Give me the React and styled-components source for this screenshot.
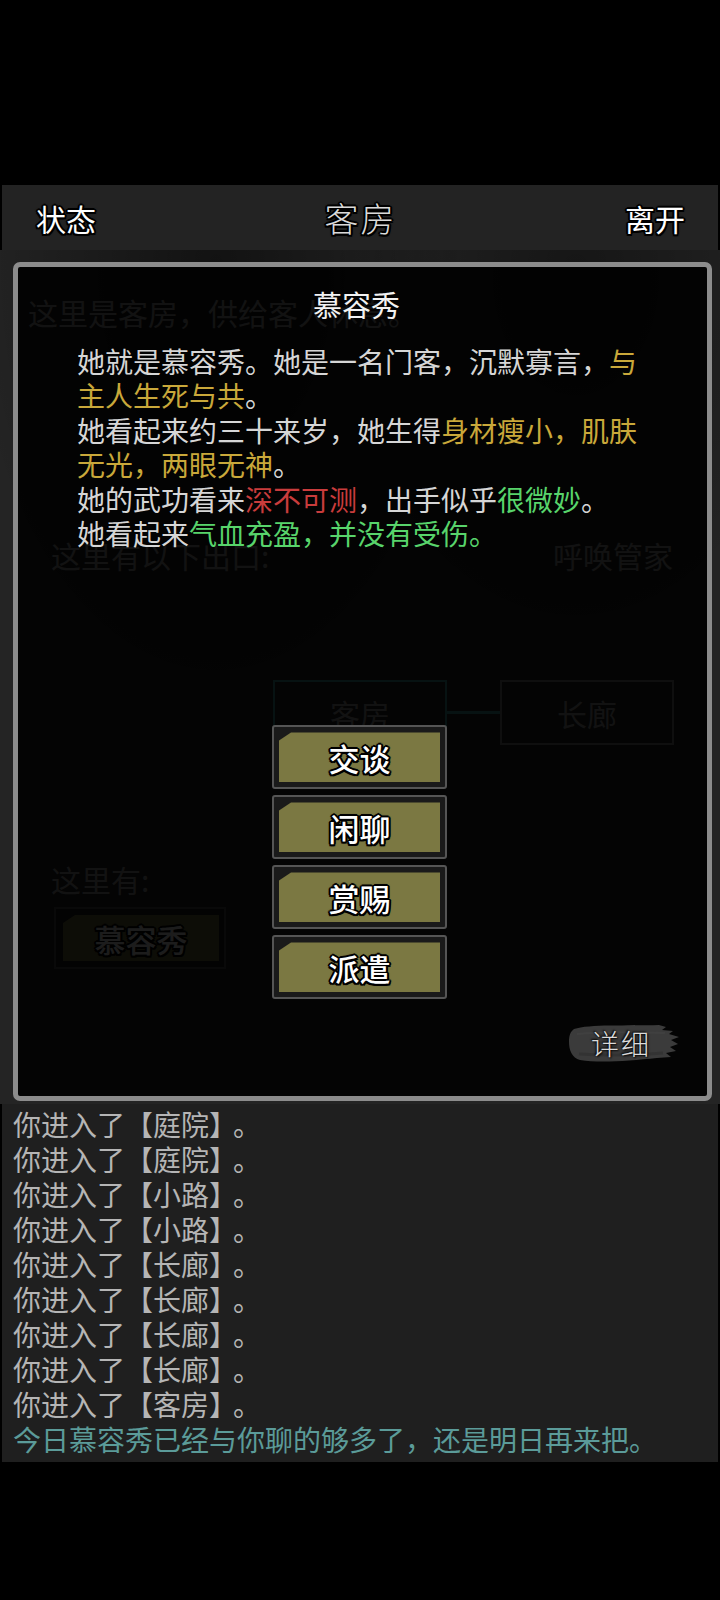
import React from 'react';
import styled, { createGlobalStyle, css } from 'styled-components';

const GlobalStyle = createGlobalStyle`
  html, body { margin: 0; padding: 0; background: #000; }
  body {
    font-family: "Noto Sans CJK SC", "Noto Sans", sans-serif;
    width: 720px;
    min-height: 1600px;
  }
  * { box-sizing: border-box; }
`;

const outline = css`
  text-shadow:
    2px 0 0 #000, -2px 0 0 #000, 0 2px 0 #000, 0 -2px 0 #000,
    1.5px 1.5px 0 #000, -1.5px -1.5px 0 #000, 1.5px -1.5px 0 #000, -1.5px 1.5px 0 #000,
    0 0 3px #000;
`;

const Screen = styled.div`
  width: 720px;
  min-height: 1600px;
  background: #000;
  padding-top: 185px;
`;

const Header = styled.header`
  margin: 0 2px;
  height: 65px;
  background: #232323;
  display: flex;
  align-items: center;
  justify-content: space-between;
  padding: 0 33px 0 34px;
`;

const HeaderButton = styled.div`
  font-size: 30px;
  line-height: 40px;
  color: #fff;
  font-weight: 400;
  ${outline}
`;

const HeaderTitle = styled.div`
  font-size: 34px;
  line-height: 40px;
  color: #dadada;
  font-weight: 300;
  letter-spacing: 2px;
  ${outline}
`;

const Stage = styled.main`
  position: relative;
  height: 854px;
  background:
    radial-gradient(ellipse at 30% 2%, rgba(0,0,0,0.5) 0%, rgba(0,0,0,0) 35%),
    radial-gradient(ellipse at 80% 3%, rgba(0,0,0,0.4) 0%, rgba(0,0,0,0) 30%),
    #242424;
  padding-top: 42px;
`;

const faint = '#a4a4a4';

const RoomDesc = styled.p`
  margin: 0;
  padding-left: 28px;
  font-size: 30px;
  line-height: 40px;
  color: ${faint};
`;

const ExitsRow = styled.div`
  margin-top: 203px;
  display: flex;
  justify-content: space-between;
  padding: 0 47px 0 51px;
  font-size: 30px;
  line-height: 40px;
  color: ${faint};
`;

const MapRow = styled.div`
  margin-top: 105px;
  margin-left: 273px;
  display: flex;
  align-items: center;
`;

const MapNode = styled.div`
  width: 174px;
  height: 65px;
  border: 2px solid ${p => (p.$current ? '#3fa3a0' : '#8a8a8a')};
  display: flex;
  align-items: center;
  justify-content: center;
  font-size: 30px;
  color: ${faint};
`;

const MapLink = styled.div`
  width: 53px;
  height: 3px;
  background: #3fa3a0;
`;

const HereLabel = styled.div`
  margin-top: 114px;
  padding-left: 51px;
  font-size: 30px;
  line-height: 40px;
  color: ${faint};
`;

const NpcButton = styled.div`
  margin: 8px 0 0 54px;
  width: 172px;
  height: 62px;
  border: 2px solid #555;
  background: #1b1b1b;
  padding: 6px 5px 6px 7px;
  display: flex;
`;

const OliveFace = styled.div`
  flex: 1;
  background: #7b7842;
  clip-path: polygon(12px 0, 100% 0, 100% 100%, 0 100%, 0 8px);
  display: flex;
  align-items: center;
  justify-content: center;
  font-size: 31px;
  color: #fff;
  font-weight: 500;
  ${outline}
`;

const Modal = styled.section`
  position: absolute;
  top: 12px;
  left: 13px;
  width: 699px;
  height: 839px;
  border: 5px solid #8c8c8c;
  border-radius: 7px;
  background: rgba(0, 0, 0, 0.89);
  display: flex;
  flex-direction: column;
`;

const ModalTitle = styled.h2`
  margin: 0;
  padding: 17px 12px 0 0;
  font-size: 29px;
  line-height: 40px;
  font-weight: 400;
  text-align: center;
  color: #f2f2f2;
`;

const Description = styled.div`
  margin: 20px 0 0 59px;
  width: 566px;
  font-size: 28px;
  line-height: 34.4px;
  color: #d6d6d6;
`;

const Para = styled.p`
  margin: 0;
`;

const Hl = styled.span`
  color: ${p => ({ gold: '#c9a83a', red: '#c93c3c', green: '#58d46b' }[p.$c])};
`;

const Actions = styled.div`
  margin: 175px 0 0 254px;
  display: flex;
  flex-direction: column;
  gap: 6px;
`;

const ActionButton = styled.div`
  width: 175px;
  height: 64px;
  border: 2px solid #555;
  border-radius: 3px;
  background: #1a1a1a;
  padding: 5px;
  display: flex;
`;

const DetailRow = styled.div`
  margin-top: auto;
  display: flex;
  justify-content: flex-end;
  padding: 0 26px 32px 0;
`;

const Brush = styled.div`
  position: relative;
  width: 114px;
  height: 42px;
  display: flex;
  align-items: center;
  justify-content: center;
  padding-right: 6px;
  font-size: 28px;
  font-weight: 300;
  letter-spacing: 2px;
  color: #dcdcdc;
  text-shadow: 1px 1px 2px #000, -1px -1px 2px #000;
  svg { position: absolute; inset: 0; z-index: 0; }
  span { position: relative; z-index: 1; }
`;

const Log = styled.section`
  margin: 0 2px;
  background: #1f1f1f;
  padding: 3px 11px 5px;
  font-size: 28px;
  line-height: 35px;
  color: #b5b5b5;
`;

const LogLine = styled.div`
  color: ${p => (p.$notice ? '#5b9b99' : '#b5b5b5')};
  white-space: nowrap;
`;

const Stop = styled.span`
  margin-left: 10px;
`;

const logs = ['庭院', '庭院', '小路', '小路', '长廊', '长廊', '长廊', '长廊', '客房'];

function BrushShape() {
  return (
    <svg width="114" height="42" viewBox="0 0 114 42">
      <path
        d="M7 7 C 22 2, 60 4, 92 3 L 99 5 L 95 8 L 106 9 L 102 12 L 112 15 L 104 18 L 111 22 L 103 25 L 109 29 L 99 31 L 104 35 L 90 36 C 62 39, 32 41, 13 38 C 5 36, 2 28, 2 20 C 2 14, 3 10, 7 7 Z"
        fill="#3b3b3b"
      />
      <path d="M10 12 C 40 9, 70 10, 98 11" stroke="#444" strokeWidth="2" fill="none" opacity="0.6" />
      <path d="M12 32 C 40 34, 70 33, 96 31" stroke="#303030" strokeWidth="3" fill="none" opacity="0.7" />
    </svg>
  );
}

export default function App() {
  return (
    <>
      <GlobalStyle />
      <Screen>
        <Header>
          <HeaderButton>状态</HeaderButton>
          <HeaderTitle>客房</HeaderTitle>
          <HeaderButton>离开</HeaderButton>
        </Header>
        <Stage>
          <RoomDesc>这里是客房，供给客人休息。</RoomDesc>
          <ExitsRow>
            <span>这里有以下出口:</span>
            <span>呼唤管家</span>
          </ExitsRow>
          <MapRow>
            <MapNode $current>客房</MapNode>
            <MapLink />
            <MapNode>长廊</MapNode>
          </MapRow>
          <HereLabel>这里有:</HereLabel>
          <NpcButton>
            <OliveFace>慕容秀</OliveFace>
          </NpcButton>

          <Modal>
            <ModalTitle>慕容秀</ModalTitle>
            <Description>
              <Para>
                她就是慕容秀。她是一名门客，沉默寡言，<Hl $c="gold">与主人生死与共</Hl>。
              </Para>
              <Para>
                她看起来约三十来岁，她生得<Hl $c="gold">身材瘦小，肌肤无光，两眼无神</Hl>。
              </Para>
              <Para>
                她的武功看来<Hl $c="red">深不可测</Hl>，出手似乎<Hl $c="green">很微妙</Hl>。
              </Para>
              <Para>
                她看起来<Hl $c="green">气血充盈，并没有受伤。</Hl>
              </Para>
            </Description>
            <Actions>
              {['交谈', '闲聊', '赏赐', '派遣'].map(a => (
                <ActionButton key={a}>
                  <OliveFace>{a}</OliveFace>
                </ActionButton>
              ))}
            </Actions>
            <DetailRow>
              <Brush>
                <BrushShape />
                <span>详细</span>
              </Brush>
            </DetailRow>
          </Modal>
        </Stage>
        <Log>
          {logs.map((l, i) => (
            <LogLine key={i}>你进入了【{l}】<Stop>。</Stop></LogLine>
          ))}
          <LogLine $notice>今日慕容秀已经与你聊的够多了，还是明日再来把。</LogLine>
        </Log>
      </Screen>
    </>
  );
}
